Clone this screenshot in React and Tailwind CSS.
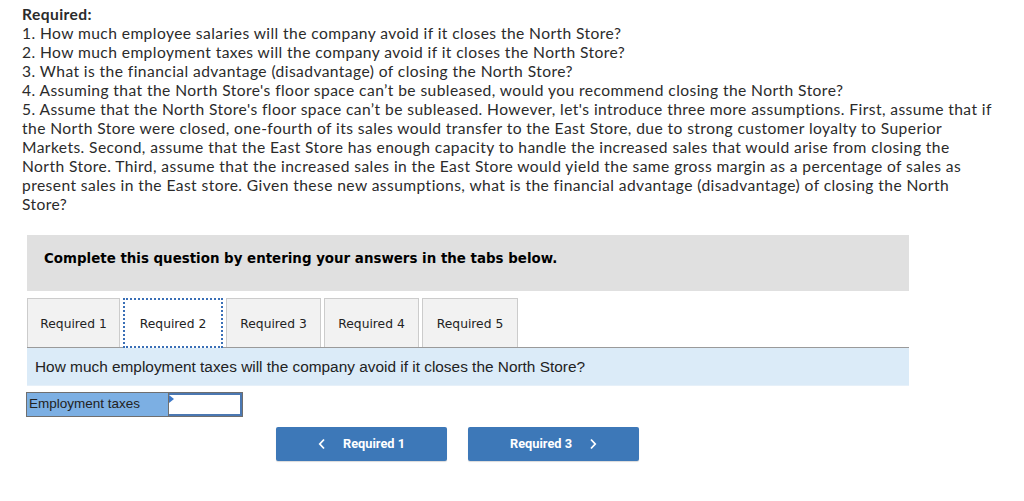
import React from "react";

const lines = [
  "1. How much employee salaries will the company avoid if it closes the North Store?",
  "2. How much employment taxes will the company avoid if it closes the North Store?",
  "3. What is the financial advantage (disadvantage) of closing the North Store?",
  "4. Assuming that the North Store's floor space can’t be subleased, would you recommend closing the North Store?",
  "5. Assume that the North Store's floor space can’t be subleased. However, let's introduce three more assumptions. First, assume that if",
  "the North Store were closed, one-fourth of its sales would transfer to the East Store, due to strong customer loyalty to Superior",
  "Markets. Second, assume that the East Store has enough capacity to handle the increased sales that would arise from closing the",
  "North Store. Third, assume that the increased sales in the East Store would yield the same gross margin as a percentage of sales as",
  "present sales in the East store. Given these new assumptions, what is the financial advantage (disadvantage) of closing the North",
  "Store?",
];

export default function App() {
  return (
    <div className="w-[1024px] h-[501px] bg-white overflow-hidden relative">
      <div className="pl-[22px] pt-[5px] text-[15.6px] leading-[19px] tracking-[0.42px] text-[#2b2b2b] whitespace-nowrap" style={{ fontFamily: "Lato, 'Open Sans', sans-serif" }}>
        <div className="font-bold">Required:</div>
        {lines.map((l) => (
          <div key={l}>{l}</div>
        ))}
      </div>

      <div className="ml-[27px] w-[882px] mt-[21px]">
        <div className="h-[56px] bg-[#e0e0e0] flex items-center pl-[17px] pb-[7px]">
          <span className="font-bold text-[13.4px] text-black" style={{ fontFamily: "'DejaVu Sans', Verdana, sans-serif" }}>
            Complete this question by entering your answers in the tabs below.
          </span>
        </div>

        <div className="mt-[7px] flex items-end gap-[3px] h-[50px] border-b border-[#9a9a9a] text-[12.3px] text-[#222]" style={{ fontFamily: "'DejaVu Sans', Verdana, sans-serif" }}>
          <div className="h-[49px] w-[93px] pt-[2px] bg-[#f2f2f2] border border-b-0 border-[#cccccc] flex items-center justify-center">Required 1</div>
          <div className="h-[50px] w-[100px] pt-[2px] bg-white border-2 border-dotted border-[#3a6fb6] flex items-center justify-center -mb-px">Required 2</div>
          <div className="h-[49px] w-[95px] pt-[2px] bg-[#f2f2f2] border border-b-0 border-[#cccccc] flex items-center justify-center">Required 3</div>
          <div className="h-[49px] w-[95px] pt-[2px] bg-[#f2f2f2] border border-b-0 border-[#cccccc] flex items-center justify-center">Required 4</div>
          <div className="h-[49px] w-[96px] pt-[2px] bg-[#f2f2f2] border border-b-0 border-[#cccccc] flex items-center justify-center">Required 5</div>
        </div>

        <div className="h-[38px] bg-[#dbebf8] border-b border-[#e6f0f9] flex items-center pl-[8px] text-[15.4px] text-[#222]" style={{ fontFamily: "'Liberation Sans', Arial, sans-serif" }}>
          How much employment taxes will the company avoid if it closes the North Store?
        </div>

        <div className="mt-[6px] -ml-px flex w-[217px] h-[25px] border border-[#6f6f6f]" style={{ fontFamily: "'Liberation Sans', Arial, sans-serif" }}>
          <div className="w-[142px] bg-[#7cafe3] border-r border-[#6f6f6f] text-[13.5px] text-[#222] flex items-center pl-[2px]">Employment taxes</div>
          <div className="relative flex-1 bg-white border-2 border-l-0 border-[#4b78b2]">
            <div className="absolute left-0 top-0 w-0 h-0 border-t-[4px] border-b-[4px] border-l-[5px] border-t-transparent border-b-transparent border-l-[#3c78c8]" />
          </div>
        </div>

        <div className="mt-[10px] ml-[249px] flex gap-[21px]" style={{ fontFamily: "Roboto, 'Liberation Sans', sans-serif" }}>
          <button className="w-[171px] h-[34px] bg-[#3d78b8] rounded-[2px] text-white text-[12.8px] font-bold flex items-center justify-center shadow-[0_1px_1px_rgba(0,0,0,0.15)]">
            <svg width="8" height="12" viewBox="0 0 8 12" className="mr-[17px]"><path d="M6 1.5 L1.8 6 L6 10.5" fill="none" stroke="white" strokeWidth="1.8" /></svg>
            Required 1
          </button>
          <button className="w-[171px] h-[34px] bg-[#3d78b8] rounded-[2px] text-white text-[12.8px] font-bold flex items-center justify-center shadow-[0_1px_1px_rgba(0,0,0,0.15)]">
            Required 3
            <svg width="8" height="12" viewBox="0 0 8 12" className="ml-[17px]"><path d="M2 1.5 L6.2 6 L2 10.5" fill="none" stroke="white" strokeWidth="1.8" /></svg>
          </button>
        </div>
      </div>
    </div>
  );
}
